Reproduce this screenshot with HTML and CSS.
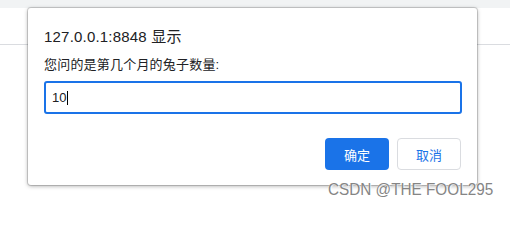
FILE: index.html
```html
<!DOCTYPE html>
<html lang="zh-CN">
<head>
<meta charset="utf-8">
<title>prompt</title>
<link rel="stylesheet" href="styles.css">
</head>
<body>
<div class="page">
  <div class="tabstrip"></div>
  <div class="toolbar"></div>
</div>
<div class="dialog">
  <div class="title">127.0.0.1:8848 显示</div>
  <div class="message">您问的是第几个月的兔子数量:</div>
  <div class="field"><span class="value">10</span><span class="caret"></span></div>
  <div class="actions">
    <div class="btn btn-primary">确定</div>
    <div class="btn btn-secondary">取消</div>
  </div>
</div>
<div class="watermark">CSDN @THE FOOL295</div>
</body>
</html>
```
FILE: styles.css
```css
html, body {
  margin: 0;
  padding: 0;
  background: #ffffff;
}
body {
  width: 510px;
  height: 206px;
  overflow: hidden;
  position: relative;
  font-family: "Liberation Sans", Arial, "Noto Sans CJK SC", sans-serif;
}
.tabstrip {
  height: 8px;
  background: #f1f3f4;
}
.toolbar {
  height: 36px;
  border-bottom: 1px solid #dadce0;
}
.dialog {
  position: absolute;
  left: 28px;
  top: 8px;
  width: 449px;
  box-sizing: border-box;
  padding: 20px 15px 15px 16px;
  background: #ffffff;
  border-radius: 3px;
  box-shadow: 0 0 0 1px rgba(0, 0, 0, 0.14), 0 1px 4px rgba(0, 0, 0, 0.35);
  display: flex;
  flex-direction: column;
}
.title {
  font-size: 15px;
  line-height: 18px;
  letter-spacing: 0.2px;
  color: #202124;
}
.message {
  margin-top: 11px;
  font-size: 13px;
  line-height: 16px;
  letter-spacing: 0.2px;
  color: #202124;
}
.field {
  margin-top: 8px;
  height: 33px;
  box-sizing: border-box;
  border: 2px solid #1a73e8;
  border-radius: 3px;
  padding: 0 6px;
  display: flex;
  align-items: center;
  font-size: 13px;
  color: #202124;
}
.caret {
  display: inline-block;
  width: 1px;
  height: 14px;
  background: #000000;
  margin-left: 1px;
}
.actions {
  margin-top: 24px;
  display: flex;
  justify-content: flex-end;
  gap: 8px;
}
.btn {
  width: 64px;
  height: 32px;
  box-sizing: border-box;
  border-radius: 4px;
  display: flex;
  align-items: center;
  justify-content: center;
  font-size: 13px;
}
.btn-primary {
  background: #1a73e8;
  color: #ffffff;
}
.btn-secondary {
  background: #ffffff;
  border: 1px solid #dadce0;
  color: #1a73e8;
  margin-right: 1px;
}
.watermark {
  position: absolute;
  left: 328px;
  top: 181px;
  font-size: 17px;
  line-height: 17px;
  white-space: nowrap;
  color: #858585;
  transform: scaleX(0.9);
  transform-origin: left top;
  text-shadow: 0 0 1px #ffffff, 1px 1px 1px rgba(255,255,255,0.8);
}
```
